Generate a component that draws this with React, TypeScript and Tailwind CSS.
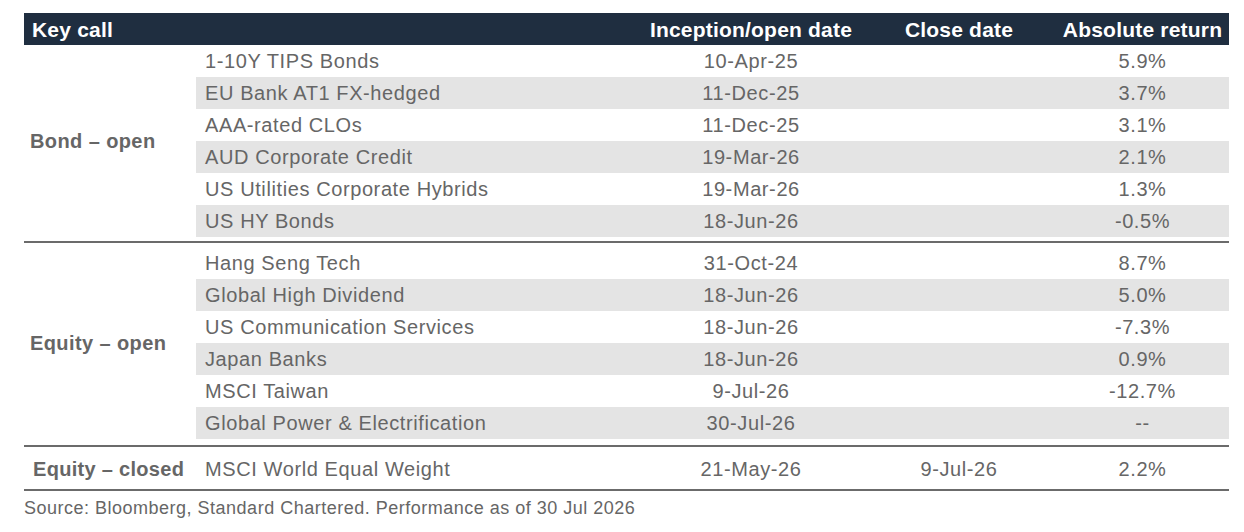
import React from "react"

type Row = { name: string; open: string; close: string; ret: string }

const bonds: Row[] = [
  { name: "1-10Y TIPS Bonds", open: "10-Apr-25", close: "", ret: "5.9%" },
  { name: "EU Bank AT1 FX-hedged", open: "11-Dec-25", close: "", ret: "3.7%" },
  { name: "AAA-rated CLOs", open: "11-Dec-25", close: "", ret: "3.1%" },
  { name: "AUD Corporate Credit", open: "19-Mar-26", close: "", ret: "2.1%" },
  { name: "US Utilities Corporate Hybrids", open: "19-Mar-26", close: "", ret: "1.3%" },
  { name: "US HY Bonds", open: "18-Jun-26", close: "", ret: "-0.5%" },
]

const equities: Row[] = [
  { name: "Hang Seng Tech", open: "31-Oct-24", close: "", ret: "8.7%" },
  { name: "Global High Dividend", open: "18-Jun-26", close: "", ret: "5.0%" },
  { name: "US Communication Services", open: "18-Jun-26", close: "", ret: "-7.3%" },
  { name: "Japan Banks", open: "18-Jun-26", close: "", ret: "0.9%" },
  { name: "MSCI Taiwan", open: "9-Jul-26", close: "", ret: "-12.7%" },
  { name: "Global Power & Electrification", open: "30-Jul-26", close: "", ret: "--" },
]

const closed: Row = { name: "MSCI World Equal Weight", open: "21-May-26", close: "9-Jul-26", ret: "2.2%" }

function DataRow({ row, shaded }: { row: Row; shaded: boolean }) {
  return (
    <div
      className={`grid h-8 grid-cols-[444px_222px_194px_173px] items-center ${shaded ? "bg-[#e4e4e4]" : ""}`}
    >
      <div className="pl-[9px]">{row.name}</div>
      <div className="text-center">{row.open}</div>
      <div className="text-center">{row.close}</div>
      <div className="text-center">{row.ret}</div>
    </div>
  )
}

function Section({ label, rows }: { label: string; rows: Row[] }) {
  return (
    <div className="flex">
      <div className="flex w-[172px] items-center pl-[6px] font-bold tracking-[0.4px]">{label}</div>
      <div className="flex flex-col">
        {rows.map((r, i) => (
          <DataRow key={r.name} row={r} shaded={i % 2 === 1} />
        ))}
      </div>
    </div>
  )
}

export default function App() {
  return (
    <div
      className="h-[532px] w-[1244px] bg-white pt-[13px] pl-[24px] text-[20px] leading-none tracking-[0.6px] text-[#666666]"
      style={{ fontFamily: '"Liberation Sans", Arial, sans-serif' }}
    >
      <div className="w-[1205px]">
        {/* Header */}
        <div className="grid h-8 grid-cols-[172px_444px_222px_194px_173px] items-center bg-[#1f2e40] text-[21px] font-bold tracking-[0.2px] text-white">
          <div className="pl-[8px]">Key call</div>
          <div></div>
          <div className="text-center">Inception/open date</div>
          <div className="text-center">Close date</div>
          <div className="text-center">Absolute return</div>
        </div>

        {/* Bond – open */}
        <div className="border-b-2 border-[#6b6b6b] pb-[4px]">
          <Section label="Bond – open" rows={bonds} />
        </div>

        {/* Equity – open */}
        <div className="border-b-2 border-[#6b6b6b] pt-[4px] pb-[6px]">
          <Section label="Equity – open" rows={equities} />
        </div>

        {/* Equity – closed */}
        <div className="flex h-[44px] items-center border-b-2 border-[#6b6b6b] pt-[2px]">
          <div className="w-[172px] pl-[9px] font-bold tracking-[0.3px]">Equity – closed</div>
          <div className="grid grid-cols-[444px_222px_194px_173px] items-center">
            <div className="pl-[9px]">{closed.name}</div>
            <div className="text-center">{closed.open}</div>
            <div className="text-center">{closed.close}</div>
            <div className="text-center">{closed.ret}</div>
          </div>
        </div>
      </div>

      <p className="pt-[8px] text-[18px] tracking-[0.5px]">
        Source: Bloomberg, Standard Chartered. Performance as of 30 Jul 2026
      </p>
    </div>
  )
}
